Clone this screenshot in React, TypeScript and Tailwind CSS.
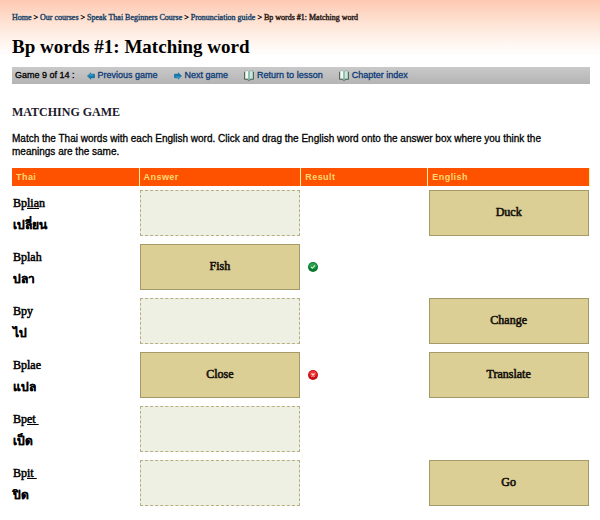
import React from 'react';
import clsx from 'clsx';

type Result = 'correct' | 'wrong';

interface Row {
    sound: [string, string, string];
    thai: string;
    answer?: string;
    result?: Result;
    english?: string;
}

const rows: Row[] = [
    { sound: ['Bp', 'lia', 'n'], thai: 'เปลี่ยน', english: 'Duck' },
    { sound: ['Bplah', '', ''], thai: 'ปลา', answer: 'Fish', result: 'correct' },
    { sound: ['Bpy', '', ''], thai: 'ไป', english: 'Change' },
    { sound: ['Bplae', '', ''], thai: 'แปล', answer: 'Close', result: 'wrong', english: 'Translate' },
    { sound: ['Bp', 'et ', ''], thai: 'เป็ด' },
    { sound: ['Bp', 'it ', ''], thai: 'ปิด', english: 'Go' },
];

const crumbs = ['Home', 'Our courses', 'Speak Thai Beginners Course', 'Pronunciation guide'];

const columns = [
    { label: 'Thai', width: 'w-[22%]' },
    { label: 'Answer', width: 'w-[28%]' },
    { label: 'Result', width: 'w-[22%]' },
    { label: 'English', width: 'w-[28%]' },
];

const ArrowIcon = ({ flip = false }: { flip?: boolean }) => (
    <svg viewBox="0 0 8 8" className={clsx('size-2 shrink-0', flip && 'rotate-180')} aria-hidden="true">
        <path d="M0 4 4 .2V1.8H6.8Q8 1.8 8 3V5Q8 6.2 6.8 6.2H4V7.8Z" fill="#1877a8" />
        <path d="M1.4 3.8 3.4 2V3.2H6.6" fill="none" stroke="#4fafd3" strokeWidth=".7" />
    </svg>
);

const BookIcon = () => (
    <svg viewBox="0 0 10 11" className="h-[11px] w-2.5 shrink-0" aria-hidden="true">
        <path d="M.5 1.8V9.3Q3 9 5 10.3 7 9 9.5 9.3V1.8" fill="#dfe9dc" stroke="#4d5f52" />
        <path d="M1.2 .7Q3.6 .4 5 1.8V9.2Q3.6 8.1 1.2 8.4Z" fill="#f7faf4" stroke="#8fa597" strokeWidth=".5" />
        <path d="M8.8 .7Q6.4 .4 5 1.8V9.2Q6.4 8.1 8.8 8.4Z" fill="#c9e9df" stroke="#6f9d92" strokeWidth=".5" />
        <path d="M5 1.8V9.4" stroke="#3f9c95" strokeWidth=".7" />
    </svg>
);

const ResultIcon = ({ result }: { result: Result }) => (
    <svg viewBox="0 0 10 10" className="size-2.5" role="img" aria-label={result}>
        <circle cx="5" cy="5" r="5" fill={result === 'correct' ? '#087a2c' : '#c80f16'} />
        <ellipse cx="5" cy="3.8" rx="3.6" ry="2.8" fill={result === 'correct' ? '#2f9f50' : '#ec3a3a'} />
        {result === 'correct' ? (
            <path d="M3 5 4.4 6.3 7 3.4" fill="none" stroke="#c9f5cf" strokeWidth="1.1" />
        ) : (
            <path d="M3.5 3.5 6.5 6.5M6.5 3.5 3.5 6.5" stroke="#ffd9d4" strokeWidth="1.2" />
        )}
    </svg>
);

const NavLink = ({ icon, children }: { icon: React.ReactNode; children: React.ReactNode }) => (
    <a href="#" className="flex items-center gap-[3px] text-[#0b3a78] hover:underline">
        {icon}
        {children}
    </a>
);

const WordCard = ({ word }: { word: string }) => (
    <button
        type="button"
        draggable
        className="block h-[46px] w-full cursor-move border border-[#a39a68] bg-[#dccf96] pb-0.5 font-['Liberation_Serif',serif] text-xs text-[#15120c] [-webkit-text-stroke:0.6px]"
    >
        {word}
    </button>
);

export default function App() {
    return (
        <div className="min-h-screen bg-white bg-[linear-gradient(to_bottom,#fec8b2_0px,#fee0d0_20px,#fff5ef_42px,#ffffff_56px)] pt-3 pr-2.5 pl-3 font-['Liberation_Sans',Arial,sans-serif] text-black">
            <nav
                className="font-['Liberation_Serif',serif] text-[8px] leading-3 [-webkit-text-stroke:0.4px]"
                aria-label="Breadcrumb"
            >
                {crumbs.map((crumb) => (
                    <React.Fragment key={crumb}>
                        <a href="#" className="text-[#1c4469] hover:underline">
                            {crumb}
                        </a>
                        {' > '}
                    </React.Fragment>
                ))}
                <span className="text-[#2b1815]">Bp words #1: Matching word</span>
            </nav>

            <h1 className="mt-[13px] font-['Liberation_Serif',serif] text-[19px] leading-5 font-bold">
                Bp words #1: Matching word
            </h1>

            <div className="mt-2.5 flex h-[17px] items-center bg-[linear-gradient(#c9c9c9,#b4b4b4)] pl-[3px] text-[9px] whitespace-nowrap text-black [-webkit-text-stroke:0.3px]">
                <span className="mr-3">Game 9 of 14 :</span>
                <div className="flex items-center gap-4">
                    <NavLink icon={<ArrowIcon />}>Previous game</NavLink>
                    <NavLink icon={<ArrowIcon flip />}>Next game</NavLink>
                    <NavLink icon={<BookIcon />}>Return to lesson</NavLink>
                    <NavLink icon={<BookIcon />}>Chapter index</NavLink>
                </div>
            </div>

            <h2 className="mt-5 font-['Liberation_Serif',serif] text-xs leading-4 font-bold text-[#1d1a2b]">
                MATCHING GAME
            </h2>
            <p className="mt-3 pr-8 text-[10px] leading-[13px] [-webkit-text-stroke:0.3px]">
                Match the Thai words with each English word. Click and drag the English word onto the answer box
                where you think the meanings are the same.
            </p>

            <table className="mt-2.5 w-full table-fixed border-collapse">
                <thead>
                    <tr>
                        {columns.map(({ label, width }) => (
                            <th
                                key={label}
                                className={clsx(
                                    width,
                                    'h-[18px] border-r border-[#fdf0a8] bg-[#ff5200] px-1 text-left text-[9px] leading-3 font-bold tracking-wider text-[#ffd873]',
                                )}
                            >
                                {label}
                            </th>
                        ))}
                    </tr>
                </thead>
                <tbody>
                    {rows.map(({ sound, thai, answer, result, english }) => (
                        <tr key={thai} className="h-[54px]">
                            <td className="pt-1 pl-px align-middle font-['Liberation_Serif',serif] text-xs">
                                <div className="leading-5 whitespace-pre [-webkit-text-stroke:0.5px]">
                                    {sound[0]}
                                    <u>{sound[1]}</u>
                                    {sound[2]}
                                </div>
                                <div className="leading-6 font-bold [-webkit-text-stroke:0.2px]" lang="th">
                                    {thai}
                                </div>
                            </td>
                            <td className="px-px align-middle">
                                {answer ? (
                                    <WordCard word={answer} />
                                ) : (
                                    <div className="h-[46px] border border-dashed border-[#b9ae83] bg-[#eff0e4]" />
                                )}
                            </td>
                            <td className="pl-[7px] align-middle">{result && <ResultIcon result={result} />}</td>
                            <td className="px-px align-middle">{english && <WordCard word={english} />}</td>
                        </tr>
                    ))}
                </tbody>
            </table>
        </div>
    );
}
